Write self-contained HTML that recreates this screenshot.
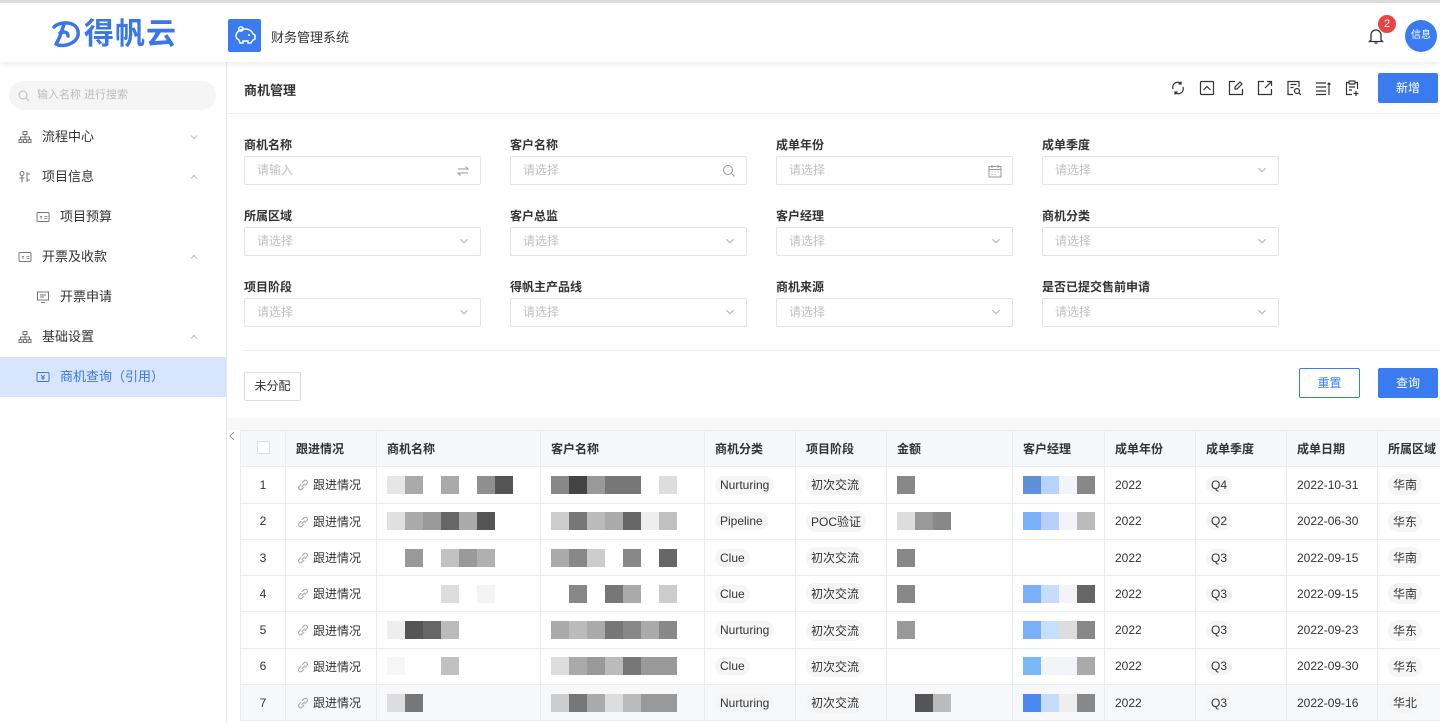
<!DOCTYPE html>
<html><head><meta charset="utf-8">
<style>
*{box-sizing:border-box;margin:0;padding:0}
body{width:1440px;height:723px;overflow:hidden;background:#fff;font-family:"Liberation Sans","Noto Sans CJK SC",sans-serif;color:#333;font-size:12px;position:relative}
.abs{position:absolute}
.hdr{left:0;top:0;width:1440px;height:62px;background:#fff;border-top:3px solid #ddd;box-shadow:0 2px 6px rgba(0,0,0,.08);z-index:3}
.side{left:0;top:62px;width:227px;height:661px;border-right:1px solid #e8e8e8;background:#fff}
.menu{position:absolute;left:0;width:226px;height:40px;font-size:13px;color:#333;line-height:40px}
.menu .ic{position:absolute;left:18px;top:13px;width:14px;height:14px}
.menu .t{position:absolute;left:42px}
.menu.sub .ic{left:36px}.menu.sub .t{left:60px}
.menu .ar{position:absolute;left:189px;top:15px}
.lbl{position:absolute;font-size:12px;color:#333;font-weight:bold}
.inp{position:absolute;width:237px;height:29px;border:1px solid #e3e3e3;border-radius:2px;color:#c0c0c0;font-size:12px;line-height:27px;padding-left:12px}
.inp .r{position:absolute;right:10px;top:7px}
table{border-collapse:collapse;table-layout:fixed;position:absolute;left:240px;top:430px;width:1200px}
td,th{border:1px solid #ebebeb;height:36.3px;font-size:12px;padding:0 10px;text-align:left;white-space:nowrap;overflow:hidden}
th{background:#f6f7f9;color:#333;font-weight:bold}
td{font-weight:normal;color:#333}
.c{text-align:center}
.tag{display:inline-block;background:#f5f5f6;border-radius:10px;padding:2px 5px;}
.b{display:inline-block;width:18px;height:18px;vertical-align:middle}
.lk{display:inline-block;vertical-align:middle;margin-right:3px;margin-top:-2px}
.tb{position:absolute;top:80px}
</style></head><body>
<svg width="0" height="0" style="position:absolute"><defs>
<symbol id="lk" viewBox="0 0 14 14"><path d="M6 8.5l2.5-2.5M5 6.5L3 8.5a2 2 0 0 0 2.8 2.8L7.8 9.3M9 7.5L11 5.5A2 2 0 0 0 8.2 2.7L6.2 4.7" fill="none" stroke="#aaa" stroke-width="1.1" stroke-linecap="round"/></symbol>
<symbol id="dn" viewBox="0 0 10 10"><path d="M2 3.5l3 3 3-3" fill="none" stroke="#bbb" stroke-width="1"/></symbol>
<symbol id="up" viewBox="0 0 10 10"><path d="M2 6.5l3-3 3 3" fill="none" stroke="#bbb" stroke-width="1"/></symbol>
<symbol id="org" viewBox="0 0 14 14"><path d="M5 1.5h4v3H5zM1 9.5h3v3H1zM5.5 9.5h3v3h-3zM10 9.5h3v3h-3zM7 4.5v2.5M2.5 9.5V7h9v2.5M7 7v2.5" fill="none" stroke="#777" stroke-width="1"/></symbol>
<symbol id="card" viewBox="0 0 14 14"><rect x="1" y="2.5" width="12" height="9" rx="1" fill="none" stroke="#777" stroke-width="1"/><path d="M4 6l1 1.2L6 6M5 7.2V9M8.5 6.5h3M8.5 8.5h3" fill="none" stroke="#777" stroke-width=".8"/></symbol>
</defs></svg>
<div class="abs hdr">
  <svg class="abs" style="left:50px;top:14px" width="34" height="34" viewBox="0 0 34 34"><path d="M4 10c6-6 22-6 24 4s-10 16-20 14M14 7c-2 6-3 12-8 20M10 16c4-2 8-1 8 3" fill="none" stroke="#3a76e8" stroke-width="3.5" stroke-linecap="round"/></svg>
  <div class="abs" style="left:84px;top:12px;font-size:30px;font-weight:bold;color:#3a76e8;letter-spacing:1px;line-height:40px">得帆云</div>
  <div class="abs" style="left:228px;top:16px;width:33px;height:33px;background:#3a7cf0;border-radius:2px">
    <svg width="33" height="33" viewBox="0 0 33 33"><path d="M8 17c0-4 4-7 9-7 4 0 7 2 8 5l2 1v4l-2 1-2 3h-3v-2h-5v2h-3l-1-3c-2-1-3-2-3-4z" fill="none" stroke="#fff" stroke-width="1.5"/><circle cx="13" cy="10" r="2.2" fill="none" stroke="#fff" stroke-width="1.4"/><circle cx="21" cy="16" r="1" fill="#fff"/></svg>
  </div>
  <div class="abs" style="left:271px;top:24px;font-size:13px;color:#333">财务管理系统</div>
  <svg class="abs" style="left:1368px;top:24px" width="16" height="18" viewBox="0 0 16 18"><path d="M3 13V8a5 5 0 0 1 10 0v5l1.5 1.5h-13z M6.5 16h3" fill="none" stroke="#333" stroke-width="1.3"/></svg>
  <div class="abs" style="left:1378px;top:12px;width:18px;height:18px;border-radius:9px;background:#e64545;color:#fff;font-size:11px;text-align:center;line-height:18px">2</div>
  <div class="abs" style="left:1405px;top:17px;width:32px;height:32px;border-radius:16px;background:#3a7cf0;color:#fff;font-size:10px;text-align:center;line-height:32px">信息</div>
</div>
<div class="abs side">
  <div class="abs" style="left:9px;top:19px;width:207px;height:29px;border-radius:15px;background:#f5f5f5;color:#bbb;font-size:11px;line-height:29px;padding-left:28px">输入名称 进行搜索</div>
  <svg class="abs" style="left:18px;top:28px" width="12" height="12" viewBox="0 0 12 12"><circle cx="5" cy="5" r="4" fill="none" stroke="#bbb" stroke-width="1"/><path d="M8 8l3 3" stroke="#bbb"/></svg>
  <div class="menu" style="top:55px"><svg class="ic"><use href="#org"/></svg><span class="t">流程中心</span><svg class="ar" width="10" height="10"><use href="#dn"/></svg></div>
  <div class="menu" style="top:95px"><svg class="ic" viewBox="0 0 14 14"><circle cx="4" cy="3.5" r="2" fill="none" stroke="#777"/><path d="M4 5.5v7M1.5 8h5M9 2v10M9 4h3M9 10h3" fill="none" stroke="#777"/></svg><span class="t">项目信息</span><svg class="ar" width="10" height="10"><use href="#up"/></svg></div>
  <div class="menu sub" style="top:135px"><svg class="ic"><use href="#card"/></svg><span class="t">项目预算</span></div>
  <div class="menu" style="top:175px"><svg class="ic"><use href="#card"/></svg><span class="t">开票及收款</span><svg class="ar" width="10" height="10"><use href="#up"/></svg></div>
  <div class="menu sub" style="top:215px"><svg class="ic" viewBox="0 0 14 14"><rect x="1.5" y="2" width="11" height="8" fill="none" stroke="#777"/><path d="M4 5h6M4 7h4M5 12.5h4" stroke="#777"/></svg><span class="t">开票申请</span></div>
  <div class="menu" style="top:255px"><svg class="ic"><use href="#org"/></svg><span class="t">基础设置</span><svg class="ar" width="10" height="10"><use href="#up"/></svg></div>
  <div class="menu sub" style="top:295px;background:#d7e6fc;color:#3a76e8"><svg class="ic" viewBox="0 0 14 14"><rect x="1" y="2.5" width="12" height="9" rx="1" fill="none" stroke="#3a76e8"/><path d="M5 5l2 2 2-2M7 7v3M5 8h4" fill="none" stroke="#3a76e8" stroke-width=".9"/></svg><span class="t">商机查询（引用）</span></div>
</div>
<svg class="abs" style="left:228px;top:430px" width="8" height="12" viewBox="0 0 8 12"><path d="M6 2L2 6l4 4" fill="none" stroke="#999"/></svg>
<div class="abs" style="left:244px;top:80px;font-size:13px;font-weight:bold">商机管理</div>
<svg class="tb" style="left:1170px" width="16" height="16" viewBox="0 0 16 16" fill="none" stroke="#333" stroke-width="1.2"><path d="M3 9a5 5 0 0 1 8-5.5M13 7a5 5 0 0 1-8 5.5M11 1.5v2.5h-2.5M5 14.5V12h2.5"/></svg>
<svg class="tb" style="left:1199px" width="16" height="16" viewBox="0 0 16 16" fill="none" stroke="#333" stroke-width="1.2"><rect x="1.5" y="1.5" width="13" height="13" rx="1"/><path d="M4.5 10l3.5-3.5 3.5 3.5"/></svg>
<svg class="tb" style="left:1228px" width="16" height="16" viewBox="0 0 16 16" fill="none" stroke="#333" stroke-width="1.2"><path d="M7 1.5H1.5v13h13V9"/><path d="M12 2l2 2-5 5H7V7z"/></svg>
<svg class="tb" style="left:1257px" width="16" height="16" viewBox="0 0 16 16" fill="none" stroke="#333" stroke-width="1.2"><path d="M7 1.5H1.5v13h13V9"/><path d="M10 1.5h4.5V6M14.5 1.5L8 8"/></svg>
<svg class="tb" style="left:1286px" width="16" height="16" viewBox="0 0 16 16" fill="none" stroke="#333" stroke-width="1.2"><path d="M13 7V1.5H2v13h5"/><path d="M4.5 4.5h6M4.5 7.5h3"/><circle cx="11" cy="11" r="2.5"/><path d="M13 13l2 2"/></svg>
<svg class="tb" style="left:1315px" width="16" height="16" viewBox="0 0 16 16" fill="none" stroke="#333" stroke-width="1.2"><path d="M1 3h10M1 7h10M1 11h10M1 14.5h10M14 3v12M12.5 4.5L14 3l1.5 1.5"/></svg>
<svg class="tb" style="left:1344px" width="16" height="16" viewBox="0 0 16 16" fill="none" stroke="#333" stroke-width="1.2"><path d="M5 2.5H2.5v12H8M11 2.5h2.5V9"/><rect x="5" y="1" width="6" height="3" rx=".5"/><path d="M5 7h6M5 10h3M12 11v5M9.5 13.5h5"/></svg>
<div class="abs" style="left:1378px;top:73px;width:60px;height:30px;background:#3a7cf0;border-radius:2px;color:#fff;font-size:12px;text-align:center;line-height:30px">新增</div>
<div class="abs" style="left:227px;top:113px;width:1213px;height:1px;background:#f0f0f0"></div>

<div class="lbl" style="left:244px;top:136px">商机名称</div><div class="inp" style="left:244px;top:156px">请输入<svg class="r" width="14" height="14" viewBox="0 0 14 14" fill="none" stroke="#999"><path d="M2 5h10L9.5 2.5M12 9H2l2.5 2.5"/></svg></div>
<div class="lbl" style="left:510px;top:136px">客户名称</div><div class="inp" style="left:510px;top:156px">请选择<svg class="r" width="14" height="14" viewBox="0 0 14 14" fill="none" stroke="#999"><circle cx="6" cy="6" r="4.5"/><path d="M9.5 9.5l3 3"/></svg></div>
<div class="lbl" style="left:776px;top:136px">成单年份</div><div class="inp" style="left:776px;top:156px">请选择<svg class="r" width="14" height="14" viewBox="0 0 14 14" fill="none" stroke="#999"><rect x="1" y="2.5" width="12" height="10.5"/><path d="M1 5.5h12M4 1v3M10 1v3M3.5 8h1M6.5 8h1M9.5 8h1M3.5 10.5h1M6.5 10.5h1"/></svg></div>
<div class="lbl" style="left:1042px;top:136px">成单季度</div><div class="inp" style="left:1042px;top:156px">请选择<svg class="r" width="12" height="12"><use href="#dn"/></svg></div>
<div class="lbl" style="left:244px;top:207px">所属区域</div><div class="inp" style="left:244px;top:227px">请选择<svg class="r" width="12" height="12"><use href="#dn"/></svg></div>
<div class="lbl" style="left:510px;top:207px">客户总监</div><div class="inp" style="left:510px;top:227px">请选择<svg class="r" width="12" height="12"><use href="#dn"/></svg></div>
<div class="lbl" style="left:776px;top:207px">客户经理</div><div class="inp" style="left:776px;top:227px">请选择<svg class="r" width="12" height="12"><use href="#dn"/></svg></div>
<div class="lbl" style="left:1042px;top:207px">商机分类</div><div class="inp" style="left:1042px;top:227px">请选择<svg class="r" width="12" height="12"><use href="#dn"/></svg></div>
<div class="lbl" style="left:244px;top:278px">项目阶段</div><div class="inp" style="left:244px;top:298px">请选择<svg class="r" width="12" height="12"><use href="#dn"/></svg></div>
<div class="lbl" style="left:510px;top:278px">得帆主产品线</div><div class="inp" style="left:510px;top:298px">请选择<svg class="r" width="12" height="12"><use href="#dn"/></svg></div>
<div class="lbl" style="left:776px;top:278px">商机来源</div><div class="inp" style="left:776px;top:298px">请选择<svg class="r" width="12" height="12"><use href="#dn"/></svg></div>
<div class="lbl" style="left:1042px;top:278px">是否已提交售前申请</div><div class="inp" style="left:1042px;top:298px">请选择<svg class="r" width="12" height="12"><use href="#dn"/></svg></div>
<div class="abs" style="left:244px;top:350px;width:1196px;height:1px;background:#ebebeb"></div>
<div class="abs" style="left:244px;top:372px;width:57px;height:29px;border:1px solid #ddd;border-radius:2px;text-align:center;line-height:27px">未分配</div>
<div class="abs" style="left:1299px;top:368px;width:61px;height:30px;border:1px solid #3a7cf0;border-radius:2px;text-align:center;line-height:28px;color:#3a7cf0">重置</div>
<div class="abs" style="left:1378px;top:368px;width:60px;height:30px;background:#3a7cf0;border-radius:2px;text-align:center;line-height:30px;color:#fff">查询</div>
<div class="abs" style="left:227px;top:418px;width:1213px;height:12px;background:#f7f7f7"></div>

<table>
<colgroup><col style="width:45px"><col style="width:91px"><col style="width:164px"><col style="width:164px"><col style="width:91px"><col style="width:91px"><col style="width:126px"><col style="width:92px"><col style="width:91px"><col style="width:91px"><col style="width:91px"><col style="width:63px"></colgroup>
<tr><th class="c"><span style="display:inline-block;width:13px;height:13px;border:1px solid #ddd;background:#fff"></span></th><th>跟进情况</th><th>商机名称</th><th>客户名称</th><th>商机分类</th><th>项目阶段</th><th>金额</th><th>客户经理</th><th>成单年份</th><th>成单季度</th><th>成单日期</th><th>所属区域</th></tr>
<tr><td class="c">1</td><td><svg class="lk" width="14" height="14"><use href="#lk"/></svg>跟进情况</td><td><span class="b" style="background:#e6e6e6"></span><span class="b" style="background:#aaa"></span><span class="b"></span><span class="b" style="background:#aaa"></span><span class="b"></span><span class="b" style="background:#8f8f8f"></span><span class="b" style="background:#555"></span></td><td><span class="b" style="background:#888"></span><span class="b" style="background:#444"></span><span class="b" style="background:#999"></span><span class="b" style="background:#777"></span><span class="b" style="background:#777"></span><span class="b"></span><span class="b" style="background:#ddd"></span></td><td><span class="tag">Nurturing</span></td><td><span class="tag">初次交流</span></td><td><span class="b" style="background:#888"></span></td><td><span class="b" style="background:#5f8fd6"></span><span class="b" style="background:#b5d3fb"></span><span class="b" style="background:#f2f4f8"></span><span class="b" style="background:#888"></span></td><td>2022</td><td><span class="tag">Q4</span></td><td>2022-10-31</td><td><span class="tag">华南</span></td></tr>
<tr><td class="c">2</td><td><svg class="lk" width="14" height="14"><use href="#lk"/></svg>跟进情况</td><td><span class="b" style="background:#e0e0e0"></span><span class="b" style="background:#aaa"></span><span class="b" style="background:#999"></span><span class="b" style="background:#666"></span><span class="b" style="background:#aaa"></span><span class="b" style="background:#555"></span></td><td><span class="b" style="background:#ccc"></span><span class="b" style="background:#777"></span><span class="b" style="background:#bbb"></span><span class="b" style="background:#aaa"></span><span class="b" style="background:#666"></span><span class="b" style="background:#eee"></span><span class="b" style="background:#c0c0c0"></span></td><td><span class="tag">Pipeline</span></td><td><span class="tag">POC验证</span></td><td><span class="b" style="background:#ddd"></span><span class="b" style="background:#999"></span><span class="b" style="background:#888"></span></td><td><span class="b" style="background:#7ab0fa"></span><span class="b" style="background:#b8cffb"></span><span class="b" style="background:#f2f4f8"></span><span class="b" style="background:#bbb"></span></td><td>2022</td><td><span class="tag">Q2</span></td><td>2022-06-30</td><td><span class="tag">华东</span></td></tr>
<tr><td class="c">3</td><td><svg class="lk" width="14" height="14"><use href="#lk"/></svg>跟进情况</td><td><span class="b"></span><span class="b" style="background:#999"></span><span class="b"></span><span class="b" style="background:#c2c2c2"></span><span class="b" style="background:#999"></span><span class="b" style="background:#b0b0b0"></span></td><td><span class="b" style="background:#aaa"></span><span class="b" style="background:#888"></span><span class="b" style="background:#ccc"></span><span class="b"></span><span class="b" style="background:#888"></span><span class="b"></span><span class="b" style="background:#666"></span></td><td><span class="tag">Clue</span></td><td><span class="tag">初次交流</span></td><td><span class="b" style="background:#888"></span></td><td></td><td>2022</td><td><span class="tag">Q3</span></td><td>2022-09-15</td><td><span class="tag">华南</span></td></tr>
<tr><td class="c">4</td><td><svg class="lk" width="14" height="14"><use href="#lk"/></svg>跟进情况</td><td><span class="b"></span><span class="b"></span><span class="b"></span><span class="b" style="background:#ddd"></span><span class="b"></span><span class="b" style="background:#f4f4f4"></span></td><td><span class="b"></span><span class="b" style="background:#888"></span><span class="b"></span><span class="b" style="background:#777"></span><span class="b" style="background:#aaa"></span><span class="b"></span><span class="b" style="background:#ccc"></span></td><td><span class="tag">Clue</span></td><td><span class="tag">初次交流</span></td><td><span class="b" style="background:#888"></span></td><td><span class="b" style="background:#7ab0fa"></span><span class="b" style="background:#c5dcfb"></span><span class="b" style="background:#f2f4f8"></span><span class="b" style="background:#666"></span></td><td>2022</td><td><span class="tag">Q3</span></td><td>2022-09-15</td><td><span class="tag">华南</span></td></tr>
<tr><td class="c">5</td><td><svg class="lk" width="14" height="14"><use href="#lk"/></svg>跟进情况</td><td><span class="b" style="background:#eee"></span><span class="b" style="background:#555"></span><span class="b" style="background:#666"></span><span class="b" style="background:#bbb"></span></td><td><span class="b" style="background:#aaa"></span><span class="b" style="background:#bbb"></span><span class="b" style="background:#aaa"></span><span class="b" style="background:#777"></span><span class="b" style="background:#888"></span><span class="b" style="background:#aaa"></span><span class="b" style="background:#888"></span></td><td><span class="tag">Nurturing</span></td><td><span class="tag">初次交流</span></td><td><span class="b" style="background:#999"></span></td><td><span class="b" style="background:#7ab0fa"></span><span class="b" style="background:#c5e0fb"></span><span class="b" style="background:#ddd"></span><span class="b" style="background:#888"></span></td><td>2022</td><td><span class="tag">Q3</span></td><td>2022-09-23</td><td><span class="tag">华东</span></td></tr>
<tr><td class="c">6</td><td><svg class="lk" width="14" height="14"><use href="#lk"/></svg>跟进情况</td><td><span class="b" style="background:#f6f6f6"></span><span class="b"></span><span class="b"></span><span class="b" style="background:#c0c0c0"></span></td><td><span class="b" style="background:#ddd"></span><span class="b" style="background:#aaa"></span><span class="b" style="background:#999"></span><span class="b" style="background:#bbb"></span><span class="b" style="background:#777"></span><span class="b" style="background:#999"></span><span class="b" style="background:#999"></span></td><td><span class="tag">Clue</span></td><td><span class="tag">初次交流</span></td><td></td><td><span class="b" style="background:#7ab8fa"></span><span class="b" style="background:#f2f4f8"></span><span class="b" style="background:#f2f4f8"></span><span class="b" style="background:#aaa"></span></td><td>2022</td><td><span class="tag">Q3</span></td><td>2022-09-30</td><td><span class="tag">华东</span></td></tr>
<tr style="background:#f7f8fa"><td class="c">7</td><td><svg class="lk" width="14" height="14"><use href="#lk"/></svg>跟进情况</td><td><span class="b" style="background:#ddd"></span><span class="b" style="background:#777"></span></td><td><span class="b" style="background:#ccc"></span><span class="b" style="background:#777"></span><span class="b" style="background:#aaa"></span><span class="b" style="background:#ddd"></span><span class="b" style="background:#bbb"></span><span class="b" style="background:#999"></span><span class="b" style="background:#999"></span></td><td><span class="tag">Nurturing</span></td><td><span class="tag">初次交流</span></td><td><span class="b"></span><span class="b" style="background:#555"></span><span class="b" style="background:#bbb"></span></td><td><span class="b" style="background:#4a8af0"></span><span class="b" style="background:#c5dcfb"></span><span class="b" style="background:#eee"></span><span class="b" style="background:#888"></span></td><td>2022</td><td><span class="tag">Q3</span></td><td>2022-09-16</td><td><span class="tag">华北</span></td></tr>
</table>
</body></html>
